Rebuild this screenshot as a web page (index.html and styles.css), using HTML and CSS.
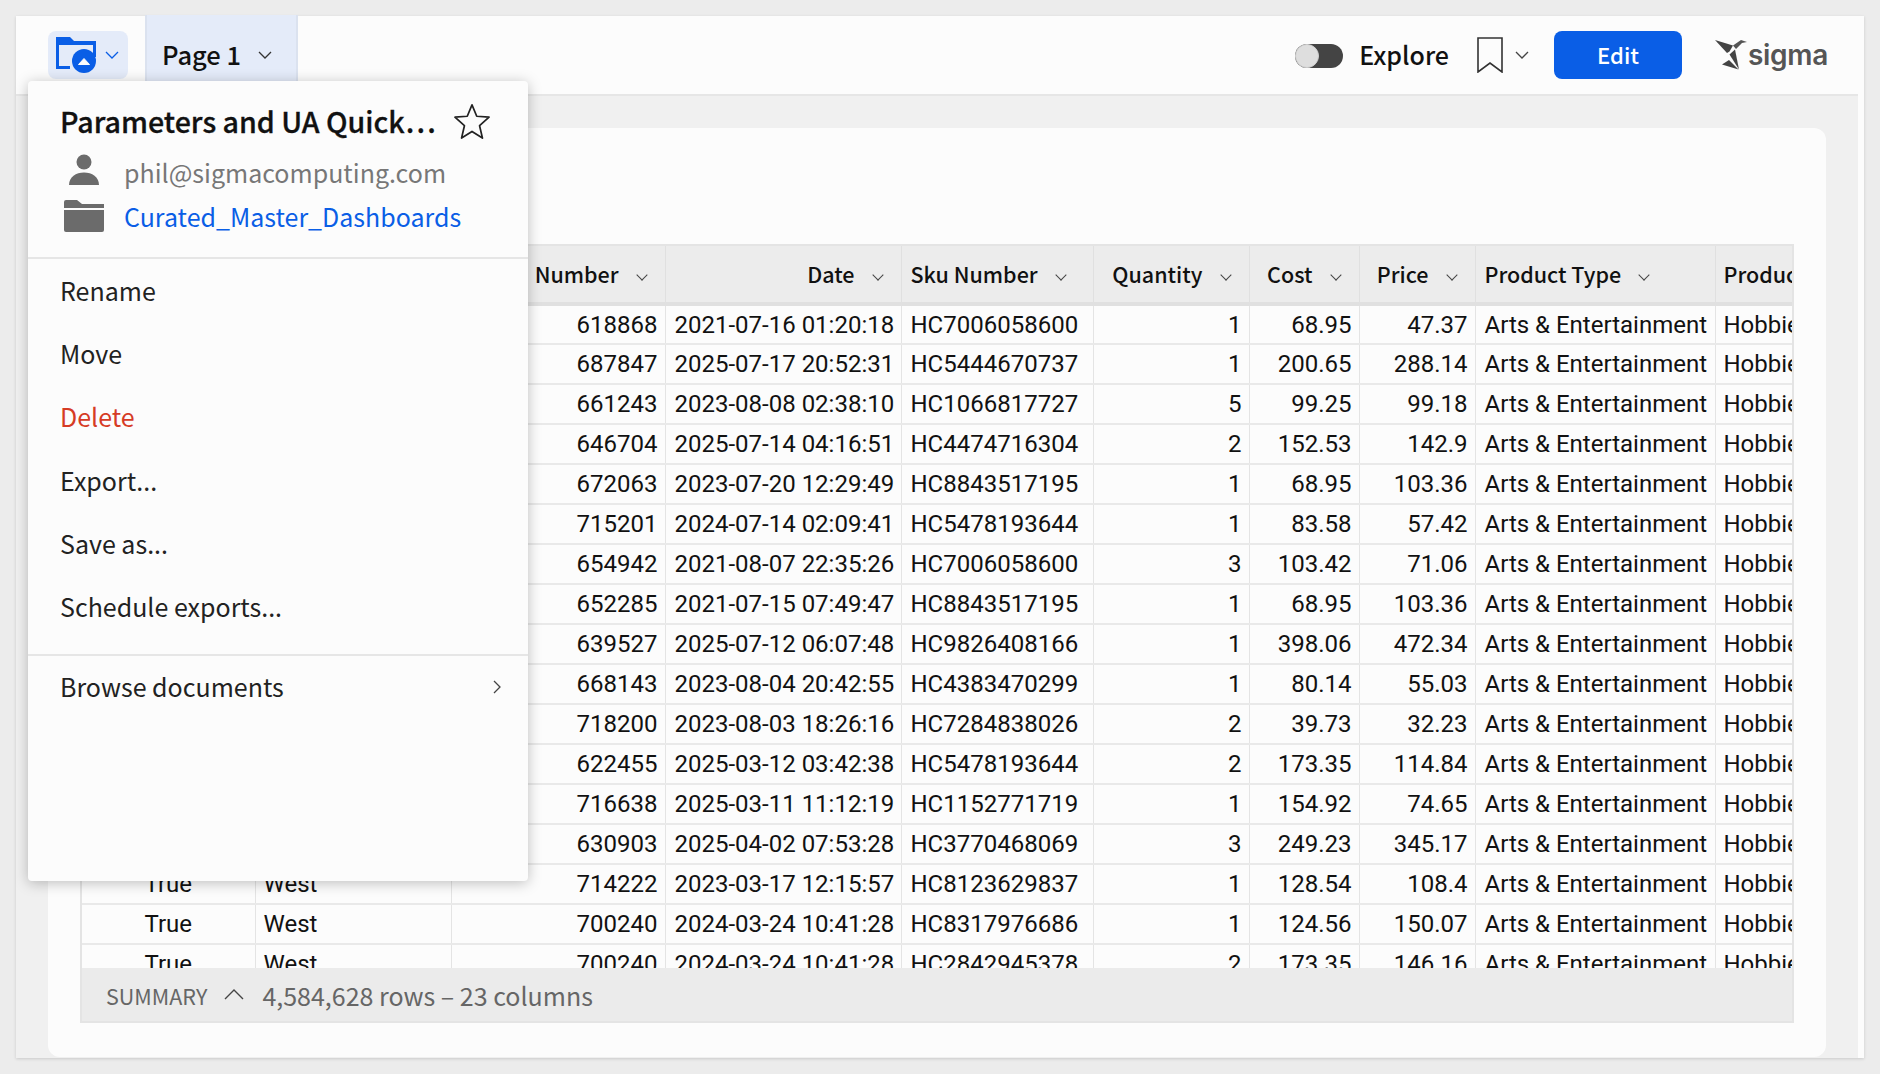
FILE: index.html
```html
<!DOCTYPE html>
<html lang="en">

<head>
  <meta charset="UTF-8" />
  <title>Parameters and UA Quick Start</title>
  <link rel="stylesheet" href="styles.css">
</head>

<body>
  <div class="frame">
    <div class="main">
      <header class="topbar">
        <div class="doc-btn">
          <svg class="doc-icon" width="40" height="38" viewBox="0 0 40 38">
            <path d="M0 1h14l4 4h22v16h-3V9H3v21h11v3H0z" fill="#0a5ee6" />
            <circle cx="28" cy="25" r="12" fill="#0a5ee6" />
            <path d="M22.5 28.5L28 22.5l5.5 6z" fill="#fcfcfc" stroke="#fcfcfc" stroke-linejoin="round" />
          </svg>
          <svg class="chev" width="14" height="8" viewBox="0 0 14 8">
            <path d="M1 1l6 6 6-6" fill="none" stroke="#0a5ee6" stroke-width="1.3" />
          </svg>
        </div>
        <div class="page-tab">
          <span>Page 1</span>
          <svg class="chev" width="14" height="8" viewBox="0 0 14 8">
            <path d="M1 1l6 6 6-6" fill="none" stroke="#333" stroke-width="1.3" />
          </svg>
        </div>
        <div class="spacer"></div>
        <div class="toggle"><div class="knob"></div></div>
        <div class="explore">Explore</div>
        <svg class="bookmark" width="26" height="36" viewBox="0 0 26 36">
          <path d="M1 1h24v34L13 26 1 35z" fill="none" stroke="#333" stroke-width="1.6" />
        </svg>
        <svg class="chev" width="14" height="8" viewBox="0 0 14 8">
          <path d="M1 1l6 6 6-6" fill="none" stroke="#444" stroke-width="1.3" />
        </svg>
        <button class="edit-btn">Edit</button>
        <div class="logo">
          <svg width="36" height="32" viewBox="0 0 36 32">
            <path d="M3 1l18 5.500-3.500 6-2.500 1.500z" fill="#444" />
            <path d="M21 6.500L29 1l6 2-5 1-6 6z" fill="#555" />
            <path d="M23 10.500l4 20-9.500-15z" fill="#444" />
            <path d="M10 25.500l7-4.500 9.500 9.500z" fill="#444" />
          </svg>
          <span>sigma</span>
        </div>
      </header>

      <div class="content">
        <div class="card">
          <div class="table">
            <div class="grid-wrap">
              <table>
                <colgroup>
                  <col class="c1"><col class="c2"><col class="c3"><col class="c4"><col class="c5">
                  <col class="c6"><col class="c7"><col class="c8"><col class="c9"><col class="c10">
                </colgroup>
                <thead>
                  <tr>
                    <th></th>
                    <th></th>
                    <th class="right"><span>Number</span><i class="sort"></i></th>
                    <th class="right"><span>Date</span><i class="sort"></i></th>
                    <th><span>Sku Number</span><i class="sort"></i></th>
                    <th class="right"><span>Quantity</span><i class="sort"></i></th>
                    <th class="right"><span>Cost</span><i class="sort"></i></th>
                    <th class="right"><span>Price</span><i class="sort"></i></th>
                    <th><span>Product Type</span><i class="sort"></i></th>
                    <th class="tight"><span>Product Family</span></th>
                  </tr>
                </thead>
                <tbody id="rows"></tbody>
              </table>
            </div>
            <div class="summary">
              <span class="sum-label">SUMMARY</span>
              <svg width="20" height="11" viewBox="0 0 20 11">
                <path d="M1 10l9-9 9 9" fill="none" stroke="#444" stroke-width="1.4" />
              </svg>
              <span class="sum-count">4,584,628 rows – 23 columns</span>
            </div>
          </div>
        </div>
      </div>
    </div>
    <div class="scroll-track"></div>
  </div>

  <div class="popup">
    <div class="pop-head">
      <div class="pop-title">
        <span class="title-text">Parameters and UA Quick…</span>
        <svg width="36" height="36" viewBox="0 0 38 38">
          <path d="M19 2l5 12 13 1-10 9 3 13-11-7-11 7 3-13L1 15l13-1z" fill="none" stroke="#222" stroke-width="1.8" stroke-linejoin="round" />
        </svg>
      </div>
      <div class="pop-meta first">
        <svg width="40" height="32" viewBox="0 0 40 32">
          <circle cx="20" cy="8" r="7.500" fill="#6b6b6b" />
          <path d="M5 31c0-8 7-12.500 15-12.500s15 4.500 15 12.500z" fill="#6b6b6b" />
        </svg>
        <span class="email">phil@sigmacomputing.com</span>
      </div>
      <div class="pop-meta">
        <svg width="40" height="32" viewBox="0 0 40 32">
          <path d="M0 2q0-2 2-2h11l5 4h22v4H0z" fill="#6b6b6b" />
          <path d="M0 10h40v20q0 2-2 2H2q-2 0-2-2z" fill="#6b6b6b" />
        </svg>
        <a class="folder-link">Curated_Master_Dashboards</a>
      </div>
    </div>
    <div class="menu">
      <div class="item">Rename</div>
      <div class="item">Move</div>
      <div class="item danger">Delete</div>
      <div class="item">Export...</div>
      <div class="item">Save as...</div>
      <div class="item">Schedule exports...</div>
    </div>
    <div class="menu last">
      <div class="item">
        <span>Browse documents</span>
        <svg class="arrow" width="8" height="14" viewBox="0 0 8 14">
          <path d="M1 1l6 6-6 6" fill="none" stroke="#444" stroke-width="1.3" />
        </svg>
      </div>
    </div>
  </div>

  <script>
    const data = [
      ["618868", "2021-07-16 01:20:18", "HC7006058600", 1, "68.95", "47.37"],
      ["687847", "2025-07-17 20:52:31", "HC5444670737", 1, "200.65", "288.14"],
      ["661243", "2023-08-08 02:38:10", "HC1066817727", 5, "99.25", "99.18"],
      ["646704", "2025-07-14 04:16:51", "HC4474716304", 2, "152.53", "142.9"],
      ["672063", "2023-07-20 12:29:49", "HC8843517195", 1, "68.95", "103.36"],
      ["715201", "2024-07-14 02:09:41", "HC5478193644", 1, "83.58", "57.42"],
      ["654942", "2021-08-07 22:35:26", "HC7006058600", 3, "103.42", "71.06"],
      ["652285", "2021-07-15 07:49:47", "HC8843517195", 1, "68.95", "103.36"],
      ["639527", "2025-07-12 06:07:48", "HC9826408166", 1, "398.06", "472.34"],
      ["668143", "2023-08-04 20:42:55", "HC4383470299", 1, "80.14", "55.03"],
      ["718200", "2023-08-03 18:26:16", "HC7284838026", 2, "39.73", "32.23"],
      ["622455", "2025-03-12 03:42:38", "HC5478193644", 2, "173.35", "114.84"],
      ["716638", "2025-03-11 11:12:19", "HC1152771719", 1, "154.92", "74.65"],
      ["630903", "2025-04-02 07:53:28", "HC3770468069", 3, "249.23", "345.17"],
      ["714222", "2023-03-17 12:15:57", "HC8123629837", 1, "128.54", "108.4"],
      ["700240", "2024-03-24 10:41:28", "HC8317976686", 1, "124.56", "150.07"],
      ["700240", "2024-03-24 10:41:28", "HC2842945378", 2, "173.35", "146.16"]
    ];

    const rows = document.getElementById("rows");
    data.forEach((d) => {
      const tr = document.createElement("tr");
      tr.innerHTML = `<td class="center">True</td><td class="tight">West</td>
        <td class="right">${d[0]}</td><td>${d[1]}</td><td>${d[2]}</td>
        <td class="right">${d[3]}</td><td class="right">${d[4]}</td><td class="right">${d[5]}</td>
        <td>Arts &amp; Entertainment</td><td class="tight">Hobbies &amp; Creative Arts</td>`;
      rows.appendChild(tr);
    });
  </script>
</body>

</html>
```

FILE: styles.css
```css
* {
  box-sizing: border-box;
}

body {
  margin: 0;
  padding: 16px;
  height: 1074px;
  overflow: hidden;
  background: #ececec;
  font-family: "Noto Sans CJK SC", "Open Sans", sans-serif;
  color: #111;
}

.frame {
  display: flex;
  width: 1848px;
  height: 1042px;
  background: #fcfcfc;
  box-shadow: 0 1px 3px rgba(0, 0, 0, 0.15);
}

.main {
  flex: 1;
  display: flex;
  flex-direction: column;
  min-width: 0;
}

.scroll-track {
  width: 6px;
}

.topbar {
  height: 80px;
  flex-shrink: 0;
  display: flex;
  align-items: center;
  padding-left: 32px;
  border-bottom: 2px solid #e6e6e6;
}

.doc-btn {
  width: 80px;
  height: 48px;
  margin-top: -1px;
  display: flex;
  align-items: center;
  gap: 9px;
  padding-left: 8px;
  background: #e4ebf9;
  border-radius: 8px;
}

.page-tab {
  width: 153px;
  height: 80px;
  margin-left: 17px;
  display: flex;
  align-items: center;
  gap: 17px;
  padding-left: 15px;
  background: #e4ebf9;
  border-left: 2px solid #dbe2ef;
  border-right: 2px solid #dbe2ef;
  font-size: 25.500px;
  font-weight: 500;
  line-height: 32px;
}

.page-tab span {
  margin-bottom: 2px;
}

.spacer {
  flex: 1;
}

.toggle {
  width: 48px;
  height: 24px;
  margin-top: 2px;
  border-radius: 12px;
  background: #444;
}

.knob {
  width: 24px;
  height: 24px;
  border-radius: 50%;
  background: #dedede;
  border: 1px solid #cfcfcf;
}

.explore {
  margin-left: 16px;
  margin-bottom: 2px;
  font-size: 25px;
  font-weight: 500;
  line-height: 32px;
}

.bookmark {
  margin-left: 28px;
  margin-right: 12px;
}

.edit-btn {
  width: 128px;
  height: 48px;
  margin-left: 25px;
  padding-bottom: 3px;
  border: none;
  border-radius: 8px;
  background: #0a5ee6;
  color: #fff;
  font-family: inherit;
  font-size: 22px;
  font-weight: 500;
}

.logo {
  width: 115px;
  margin-left: 30px;
  margin-right: 31px;
  display: flex;
  align-items: center;
  color: #555;
  font-family: "Inter", sans-serif;
  font-size: 28px;
  font-weight: 600;
  letter-spacing: -0.3px;
}

.logo svg {
  flex-shrink: 0;
}

.content {
  flex: 1;
  min-height: 0;
  background: #f0f0f0;
  padding: 32px 32px 0;
}

.card {
  height: 929px;
  background: #fcfcfc;
  border-radius: 12px;
  padding: 116px 32px 34px;
}

.table {
  height: 779px;
  display: flex;
  flex-direction: column;
  border: 2px solid #e4e4e4;
}

.grid-wrap {
  flex: 1;
  min-height: 0;
  overflow: hidden;
}

table {
  width: 1711px;
  table-layout: fixed;
  border-collapse: collapse;
  font-family: "Roboto", sans-serif;
  font-size: 24px;
}

.c1 { width: 173px; }
.c2 { width: 196px; }
.c3 { width: 214px; }
.c4 { width: 236px; }
.c5 { width: 192px; }
.c6 { width: 156px; }
.c7 { width: 110px; }
.c8 { width: 116px; }
.c9 { width: 240px; }
.c10 { width: 78px; }

th {
  height: 58px;
  padding: 0 7px 2px 9px;
  background: #ececec;
  border-right: 1px solid #e0e0e0;
  border-bottom: 4px solid #e0e0e0;
  font-family: "Noto Sans CJK SC", sans-serif;
  font-size: 21.500px;
  font-weight: 500;
  text-align: left;
  white-space: nowrap;
  overflow: hidden;
}

th.right {
  text-align: right;
}

.sort {
  display: inline-block;
  width: 8px;
  height: 8px;
  margin: 0 12px 4px 19px;
  border-right: 1.5px solid #444;
  border-bottom: 1.5px solid #444;
  transform: rotate(45deg);
}

td {
  height: 40px;
  padding: 0 7px 0 9px;
  border-right: 1px solid #e4e4e4;
  border-bottom: 2px solid #e9e9e9;
  white-space: nowrap;
  overflow: hidden;
}

td.right {
  text-align: right;
}

td.center {
  padding: 0 8px;
  text-align: center;
}

td.tight,
th.tight {
  padding-left: 8px;
}

.summary {
  height: 53px;
  flex-shrink: 0;
  display: flex;
  align-items: center;
  padding-left: 24px;
  background: #ebebeb;
  color: #666;
}

.sum-label {
  margin-top: 2px;
  font-size: 21.500px;
  line-height: 28px;
}

.summary svg {
  margin-left: 17px;
  margin-right: 18px;
}

.sum-count {
  font-size: 25px;
  line-height: 32px;
}

/* dropdown over the page */
.popup {
  position: absolute;
  left: 28px;
  top: 81px;
  width: 500px;
  height: 800px;
  background: #fcfcfc;
  border-radius: 4px;
  box-shadow: 0 2px 14px rgba(0, 0, 0, 0.25);
}

.pop-head {
  height: 178px;
  padding: 21px 0 0 32px;
  border-bottom: 2px solid #e6e6e6;
}

.pop-title {
  display: flex;
  align-items: center;
  font-size: 28.600px;
  font-weight: 500;
  line-height: 38px;
  -webkit-text-stroke: 0.3px #111;
}

.title-text {
  width: 394px;
}

.pop-meta {
  display: flex;
  align-items: center;
  gap: 20px;
  margin-left: 4px;
  height: 44px;
  font-size: 25px;
}

.pop-meta.first {
  margin-top: 10px;
}

.pop-meta.first svg {
  margin-top: -5px;
}

.email {
  color: #777;
}

.folder-link {
  color: #0a5ee6;
}

.menu.last {
  margin-top: 15px;
  border-top: 2px solid #e6e6e6;
}

.item {
  height: 63.300px;
  padding: 0 27px 2px 32px;
  display: flex;
  align-items: center;
  justify-content: space-between;
  font-size: 25px;
  color: #222;
}

.arrow {
  margin-top: 2px;
}

.danger {
  color: #d63b25;
}
```
